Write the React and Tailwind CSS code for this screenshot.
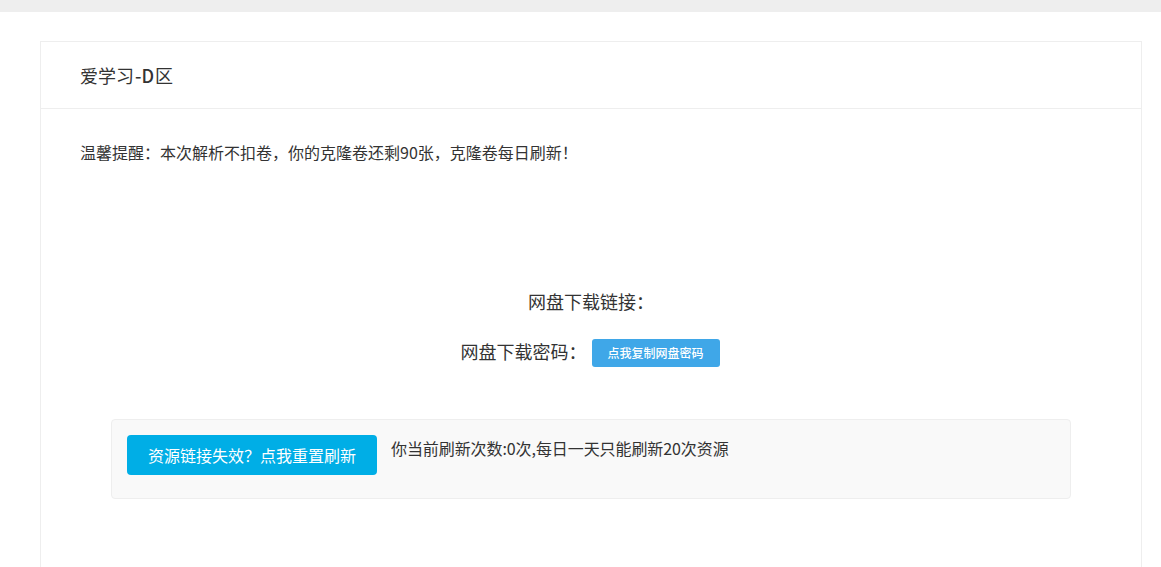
import React from "react";

const font = "font-['Noto_Sans_CJK_SC','Liberation_Sans',sans-serif]";

export default function App() {
  return (
    <div className={`h-[567px] overflow-hidden bg-white text-[#333] ${font}`}>
      <div className="h-3 bg-[#eeeeee]" />

      <div className="px-10 pt-[29px]">
        {/* Card */}
        <div className="h-[600px] border border-[#eeeeee] w-[1102px]">
          <div className="h-[67px] border-b border-[#eeeeee] px-[39px] flex items-center">
            <h1 className="text-[18px] leading-none">爱学习<span className="font-medium px-px">-D</span>区</h1>
          </div>

          <div className="px-[39px] pt-[33px]">
            <p className="text-[16px] leading-5">温馨提醒：本次解析不扣卷，你的克隆卷还剩90张，克隆卷每日刷新！</p>
          </div>

          {/* Download info */}
          <div className="mt-[127px] flex flex-col items-center text-[18px] leading-6">
            <p>网盘下载链接：</p>
            <div className="mt-[26px] mr-[2px] flex items-center gap-[5px]">
              <span className="pb-1">网盘下载密码：</span>
              <button className="h-7 w-[128px] rounded-[3px] bg-[#3fa7e8] text-[12px] font-medium text-white">点我复制网盘密码</button>
            </div>
          </div>

          {/* Refresh box */}
          <div className="mx-[70px] mt-[52px] flex h-20 items-start gap-[14px] rounded border border-[#eeeeee] bg-[#f9f9f9] p-[15px]">
            <button className="h-10 w-[250px] rounded bg-[#00aee6] text-[16px] text-white">资源链接失效？点我重置刷新</button>
            <p className="text-[16px] leading-[26px] tracking-[-0.08px]">你当前刷新次数:0次,每日一天只能刷新20次资源</p>
          </div>
        </div>
      </div>
    </div>
  );
}
